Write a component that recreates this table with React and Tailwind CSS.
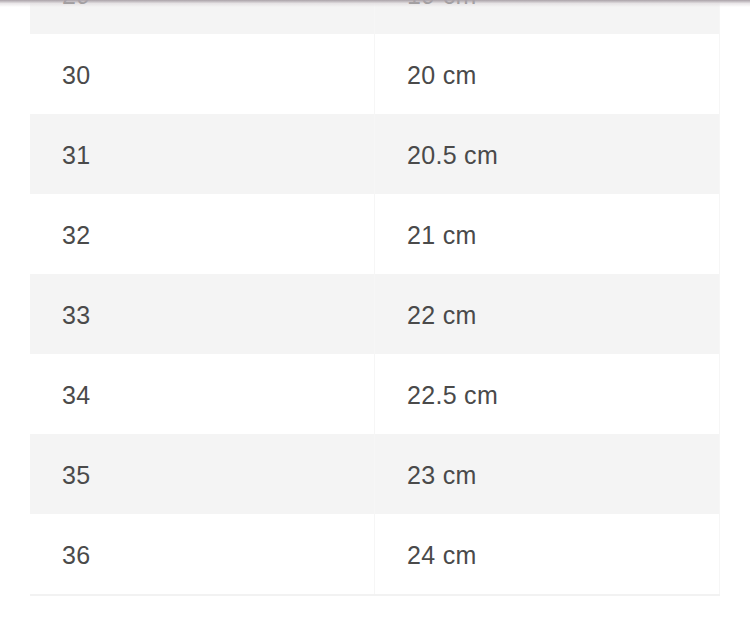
const ROWS = [
  ['29', '19 cm'],
  ['30', '20 cm'],
  ['31', '20.5 cm'],
  ['32', '21 cm'],
  ['33', '22 cm'],
  ['34', '22.5 cm'],
  ['35', '23 cm'],
  ['36', '24 cm'],
];

export default function App() {
  return (
    <div className="relative h-[628px] overflow-hidden bg-white font-['Liberation_Sans',Arial,sans-serif] text-[25px] tracking-[0.3px] text-[#4a4a4a]">
      {/* shadow from the header above */}
      <div className="pointer-events-none absolute inset-x-0 top-0 z-10 h-[7px] bg-gradient-to-b from-[#aaa2a8] via-[#dcd7da]/60 to-transparent" />

      <div className="-mt-[46px] px-[30px]">
        <div className="border-b-2 border-[#f2f2f2]">
          {ROWS.map(([size, len], i) => (
            <div key={size} className={`grid h-[80px] grid-cols-2 ${i % 2 === 0 ? 'bg-[#f4f4f4]' : 'bg-white'}`}>
              <div className="flex items-center border-r border-[#f6f6f6] pl-8 pt-1">{size}</div>
              <div className="flex items-center border-r border-[#f6f6f6] pl-8 pt-1">{len}</div>
            </div>
          ))}
        </div>
      </div>
    </div>
  );
}
